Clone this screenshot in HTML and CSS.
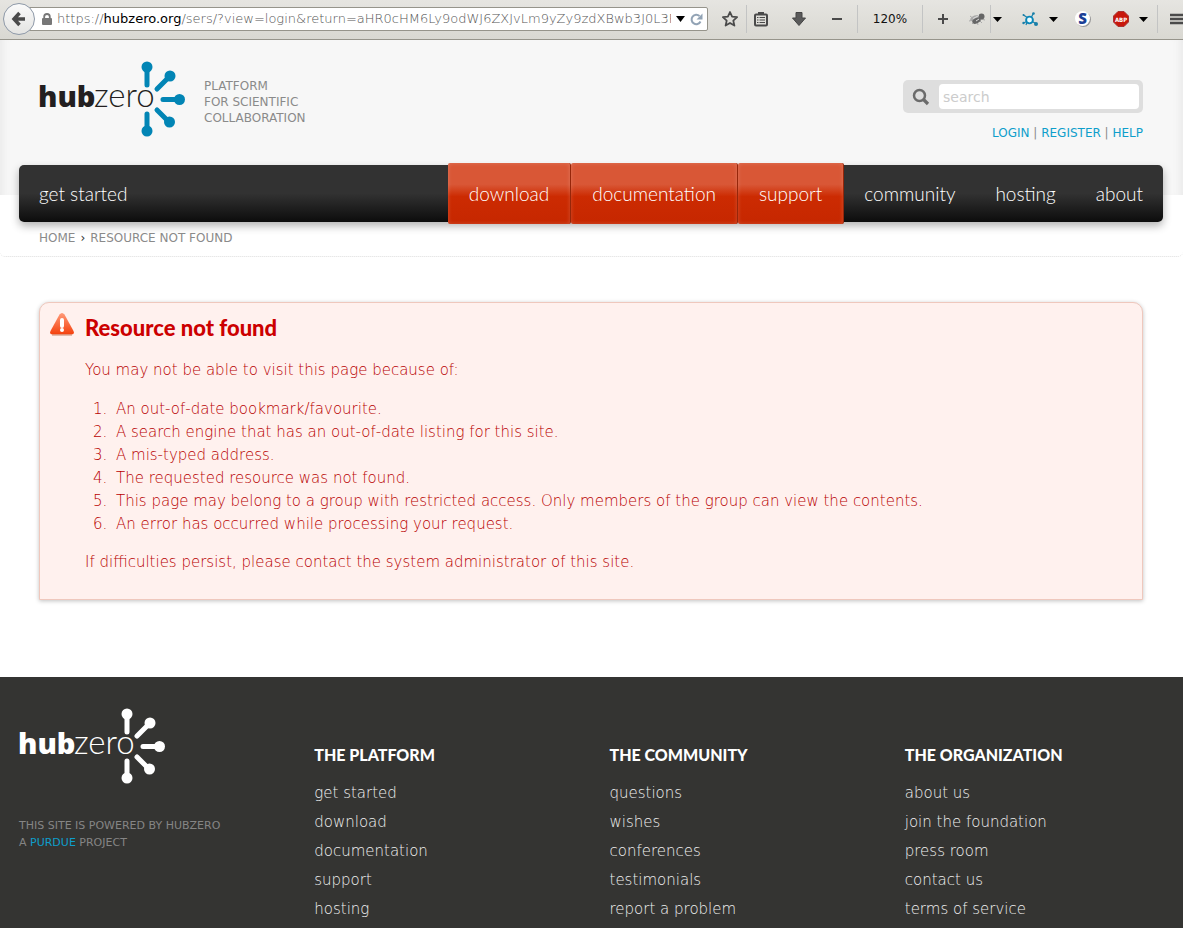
FILE: index.html
```html
<!DOCTYPE html>
<html lang="en">
<head>
<meta charset="utf-8">
<title>Resource not found</title>
<link rel="stylesheet" href="styles.css">
</head>
<body>
<div class="toolbar">
  <div class="location">
    <button class="back" aria-label="Back"><svg width="16" height="16" viewBox="0 0 16 16"><path d="M8.500 2L3 8l5.500 6M3 8h11" fill="none" stroke="#4a4a4a" stroke-width="3.500"/></svg></button>
    <div class="address">
      <svg width="10" height="12" viewBox="0 0 10 12"><path d="M2.200 6V3.800a2.800 2.800 0 0 1 5.600 0V6" fill="none" stroke="#777" stroke-width="1.800"/><rect y="5" width="10" height="7" rx="1" fill="#777"/></svg>
      <span class="url">https://<b>hubzero.org</b>/sers/?view=login&amp;return=aHR0cHM6Ly9odWJ6ZXJvLm9yZy9zdXBwb3J0L3RpY</span>
      <button class="mini" aria-label="History"><svg width="9" height="6" viewBox="0 0 9 6"><path d="M0 0h9L4.500 6z"/></svg></button>
      <button class="mini reload" aria-label="Reload"><svg width="13" height="13" viewBox="0 0 13 13"><path d="M9.500 3A4.700 4.700 0 1 0 10.500 8.500" fill="none" stroke="#92a3b5" stroke-width="2"/><path d="M12.500.5v6h-6z" fill="#92a3b5"/></svg></button>
    </div>
  </div>
  <button class="tool w28" aria-label="Bookmark"><svg width="18" height="18" viewBox="0 0 18 18"><path d="M9 2l2.100 4.700 5 .5-3.800 3.400 1.100 5L9 13l-4.400 2.600 1.100-5L1.900 7.200l5-.5z" fill="none" stroke="#4a4a4a" stroke-width="1.800" stroke-linejoin="round"/></svg></button>
  <i class="rule w4"></i>
  <button class="tool w26" aria-label="Bookmarks list"><svg width="16" height="16" viewBox="0 0 16 16"><rect x="2" y="3.500" width="12" height="11" rx="1" fill="none" stroke="#4a4a4a" stroke-width="2"/><path d="M5 1h6v3H5z" fill="#4a4a4a"/><path d="M4 6.500h1.500m1 0H12M4 9h1.500m1 0H12M4 11.500h1.500m1 0H12" stroke="#4a4a4a" stroke-width="1"/></svg></button>
  <button class="tool w50" aria-label="Downloads"><svg width="14" height="14" viewBox="0 0 14 14"><path d="M4 .5h6V6h3.500L7 13.500.5 6H4z" fill="#5a5a5a" stroke="#444"/></svg></button>
  <button class="tool w26" aria-label="Zoom out"><svg width="10" height="10" viewBox="0 0 10 10"><path d="M0 5h10" stroke="#4a4a4a" stroke-width="2"/></svg></button>
  <i class="rule w14"></i>
  <button class="tool w52">120%</button>
  <i class="rule w12"></i>
  <button class="tool w30" aria-label="Zoom in"><svg width="10" height="10" viewBox="0 0 10 10"><path d="M0 5h10M5 0v10" stroke="#4a4a4a" stroke-width="2"/></svg></button>
  <button class="tool fly" aria-label="Debugger"><svg width="18" height="14" viewBox="0 0 18 14"><path d="M2 4l4 3M1 9l5-1M4 12l3-3M10 13l-1-4M14 11l-3-3M17 8l-4-1" stroke="#aaa" stroke-width="1"/><ellipse cx="7.500" cy="6" rx="5.500" ry="2.800" fill="#aaa" transform="rotate(-20 8 6.500)"/><ellipse cx="8.500" cy="8.500" rx="4.500" ry="2.600" fill="#666" transform="rotate(-25 9 8.500)"/><circle cx="13.500" cy="4.500" r="3" fill="#666"/><path d="M5 6.500l6-3M8 9l3-2" stroke="#ddd"/></svg></button>
  <i class="rule w1"></i>
  <button class="tool w12" aria-label="Debugger menu"><svg width="9" height="5" viewBox="0 0 9 5"><path d="M0 0h9L4.500 5z"/></svg></button>
  <button class="tool w54" aria-label="Network"><svg width="16" height="14" viewBox="0 0 16 14"><path d="M1.500 3L6 6M1.500 11L6 9M9 6L11.500 1M10 9.500l4 2M5 10l-1 3" stroke="#1a7fa8" stroke-width="1.200"/><circle cx="7.500" cy="8" r="3.400" fill="#e8fbff" stroke="#0a86b8" stroke-width="1.900"/><circle cx="11.500" cy="1.500" r="1.300" fill="#1a7fa8"/><circle cx="14" cy="12" r="2" fill="#1a7fa8"/><circle cx="1.500" cy="3" r="1" fill="#1a7fa8"/><circle cx="1.500" cy="11" r="1.200" fill="#1a7fa8"/></svg></button>
  <button class="tool w12 pull" aria-label="Network menu"><svg width="9" height="5" viewBox="0 0 9 5"><path d="M0 0h9L4.500 5z"/></svg></button>
  <button class="tool w48" aria-label="S"><svg class="loose" width="16" height="16" viewBox="0 0 16 16"><circle cx="8.500" cy="8.500" r="7.500" fill="#999"/><circle cx="7.500" cy="7.500" r="7.500" fill="#fff"/><text x="7.500" y="13" text-anchor="middle" class="s-glyph">S</text></svg></button>
  <button class="tool w28" aria-label="Adblock"><svg width="16" height="16" viewBox="0 0 16 16"><path d="M5 .5h6L15.500 5v6L11 15.500H5L.5 11V5z" fill="#c8180c" stroke="#a33"/><text x="8" y="10.500" text-anchor="middle" class="abp-glyph">ABP</text></svg></button>
  <button class="tool w16" aria-label="Adblock menu"><svg width="9" height="5" viewBox="0 0 9 5"><path d="M0 0h9L4.500 5z"/></svg></button>
  <i class="rule w12"></i>
  <button class="tool menu" aria-label="Menu"><svg width="16" height="14" viewBox="0 0 16 14"><path d="M0 2h16M0 7h16M0 12h16" stroke="#4a4a4a" stroke-width="3"/></svg></button>
</div>

<header class="masthead">
  <a class="brand" href="#" aria-label="hubzero">
    <svg class="logo" width="148" height="78" viewBox="0 0 148 78">
      <text class="logo-hub" x="-1" y="46">hub</text><text class="logo-zero" x="55" y="46">zero</text>
      <g class="spokes"><path d="M108 10v14M118 28l13-13M124 38.500h17M118 49l13 13M108 53v14"/><circle cx="108" cy="6" r="5.500"/><circle cx="131" cy="15" r="5.500"/><circle cx="140.500" cy="38.500" r="5.500"/><circle cx="130.500" cy="61" r="5.500"/><circle cx="108" cy="70" r="5.500"/></g>
    </svg>
  </a>
  <p class="tagline">Platform<br>for scientific<br>collaboration</p>
  <div class="account">
    <form class="search">
      <label for="q" aria-label="Search"><svg width="18" height="18" viewBox="0 0 18 18"><circle cx="7.500" cy="7.500" r="5.500" fill="none" stroke="#6b6b6b" stroke-width="2.500"/><path d="M11.500 11.500l4.500 4.500" stroke="#6b6b6b" stroke-width="3.200"/></svg></label>
      <input id="q" type="text" placeholder="search">
    </form>
    <p class="links"><a href="#">Login</a> | <a href="#">Register</a> | <a href="#">Help</a></p>
  </div>
</header>

<nav class="nav">
  <a class="first" href="#">get started</a>
  <a class="hot" href="#">download</a>
  <a class="hot" href="#">documentation</a>
  <a class="hot" href="#">support</a>
  <a href="#">community</a>
  <a href="#">hosting</a>
  <a href="#">about</a>
</nav>
<div class="trail"><a href="#">Home</a> <b>›</b> <span>Resource not found</span></div>

<main class="content">
  <section class="error">
    <svg class="warn" width="24" height="24" viewBox="0 0 24 24">
      <defs><linearGradient id="wg" x2="0" y2="1"><stop offset="0" stop-color="#ff9a78"/><stop offset="1" stop-color="#f4400c"/></linearGradient></defs>
      <path d="M2.500 22.500h19q3.500 0 2-3.500L14.500 2.500q-2.500-3-5 0L.5 19q-1.500 3.500 2 3.500z" fill="url(#wg)"/>
      <path d="M2 23h20" stroke="#c9856b"/>
      <path d="M12 8v6" stroke="#fff" stroke-width="4" stroke-linecap="round"/><circle cx="12" cy="18" r="2" fill="#fff"/>
    </svg>
    <div>
      <h1>Resource not found</h1>
      <p>You may not be able to visit this page because of:</p>
      <ol>
        <li>An out-of-date bookmark/favourite.</li>
        <li>A search engine that has an out-of-date listing for this site.</li>
        <li>A mis-typed address.</li>
        <li>The requested resource was not found.</li>
        <li>This page may belong to a group with restricted access. Only members of the group can view the contents.</li>
        <li>An error has occurred while processing your request.</li>
      </ol>
      <p>If difficulties persist, please contact the system administrator of this site.</p>
    </div>
  </section>
</main>

<footer class="footer">
  <div class="about">
    <svg class="logo light" width="148" height="78" viewBox="0 0 148 78" role="img" aria-label="hubzero">
      <text class="logo-hub" x="-1" y="46">hub</text><text class="logo-zero" x="55" y="46">zero</text>
      <g class="spokes"><path d="M108 10v14M118 28l13-13M124 38.500h17M118 49l13 13M108 53v14"/><circle cx="108" cy="6" r="5.500"/><circle cx="131" cy="15" r="5.500"/><circle cx="140.500" cy="38.500" r="5.500"/><circle cx="130.500" cy="61" r="5.500"/><circle cx="108" cy="70" r="5.500"/></g>
    </svg>
    <p>This site is powered by HUBzero<br>A <a href="#">Purdue</a> project</p>
  </div>
  <div class="col"><h2>The Platform</h2><ul><li><a href="#">get started</a></li><li><a href="#">download</a></li><li><a href="#">documentation</a></li><li><a href="#">support</a></li><li><a href="#">hosting</a></li></ul></div>
  <div class="col"><h2>The Community</h2><ul><li><a href="#">questions</a></li><li><a href="#">wishes</a></li><li><a href="#">conferences</a></li><li><a href="#">testimonials</a></li><li><a href="#">report a problem</a></li></ul></div>
  <div class="col"><h2>The Organization</h2><ul><li><a href="#">about us</a></li><li><a href="#">join the foundation</a></li><li><a href="#">press room</a></li><li><a href="#">contact us</a></li><li><a href="#">terms of service</a></li></ul></div>
</footer>
</body>
</html>
```
FILE: styles.css
```css
* { box-sizing: border-box; }
html { background: #343432; }
body { margin: 0; background: #fff; font: 400 12px/16px "DejaVu Sans", sans-serif; color: #8a8a8a; overflow-x: hidden; }
a { color: inherit; text-decoration: none; }
h1, h2, p, ol, ul { margin: 0; }
button { border: 0; background: none; padding: 0; font: 400 12px "DejaVu Sans", sans-serif; color: #111; }

/* Browser toolbar */
.toolbar { display: flex; align-items: center; height: 40px; padding-bottom: 1px; background: linear-gradient(#e6e5e1, #d9d8d2); border-bottom: 1px solid #96948b; overflow: hidden; }
.location { flex: 1; min-width: 0; display: flex; align-items: center; margin-right: 8px; }
.back { flex: none; width: 32px; height: 32px; margin-left: 3px; border: 1px solid #8e99a8; border-radius: 50%; background: linear-gradient(#fafafa, #e4e4e2); display: flex; align-items: center; justify-content: center; z-index: 1; }
.address { flex: 1; min-width: 0; height: 24px; display: flex; align-items: center; gap: 5px; margin-left: -6px; padding: 0 4px 0 12px; background: #fff; border: 1px solid #96948b; border-radius: 0 2px 2px 0; }
.address svg { flex: none; }
.url { flex: 1; min-width: 0; overflow: hidden; white-space: nowrap; font: 200 13px/20px "DejaVu Sans", sans-serif; color: #555; }
.url b { font-weight: 400; color: #000; }
.mini { display: flex; }
.tool { flex: none; height: 32px; display: flex; align-items: center; justify-content: center; }
.w1 { width: 1px; } .w4 { width: 4px; } .w12 { width: 12px; } .w14 { width: 14px; } .w16 { width: 16px; }
.w26 { width: 26px; } .w28 { width: 28px; } .w30 { width: 30px; } .w48 { width: 48px; }
.w50 { width: 50px; } .w52 { width: 52px; } .w54 { width: 54px; }
.pull { margin-left: -10px; }
.loose { overflow: visible; }
.fly { width: 32px; padding-left: 6px; }
.menu { width: 20px; padding-left: 7px; justify-content: flex-start; overflow: hidden; }
.rule { flex: none; height: 28px; background: linear-gradient(#c3c4c4, #c3c4c4) center / 1px 100% no-repeat; }
.s-glyph { font: 800 15px "Open Sans", sans-serif; fill: #1a3f96; }
.abp-glyph { font: 700 6px "DejaVu Sans Condensed", "DejaVu Sans", sans-serif; fill: #fff; }

/* Site header */
.masthead { display: flex; align-items: flex-start; height: 155px; padding: 21px 40px 0 39px; background: #f7f7f7; box-shadow: inset 10px 0 10px -8px #e8e8e8, inset -10px 0 10px -8px #e8e8e8; }
.brand, .logo { display: block; }
.logo { overflow: visible; }
.logo-hub { font: 800 29px "Open Sans", sans-serif; fill: #231f20; }
.logo-zero { font: 300 33px Lato, sans-serif; fill: #231f20; }
.spokes { fill: #0285b5; }
.spokes path { stroke: #0285b5; stroke-width: 5; stroke-linecap: round; }
.light text, .light .spokes { fill: #fff; }
.light .spokes path { stroke: #fff; }
.tagline { margin: 17px 0 0 17px; text-transform: uppercase; }
.account { margin: 19px 0 0 auto; }
.search { display: flex; align-items: center; width: 240px; height: 33px; padding: 4px; border-radius: 5px; background: #dedede; }
.search label { flex: none; display: flex; justify-content: center; width: 32px; padding-right: 4px; }
.search input { flex: 1; min-width: 0; height: 25px; padding: 0 4px; border: 0; border-radius: 4px; background: #fff; font: 400 14px "DejaVu Sans", sans-serif; }
.search input::placeholder { color: #ccc; }
.links { margin-top: 12px; text-align: right; text-transform: uppercase; }
.links a { color: #0e9ecb; }

/* Main navigation */
.nav { display: flex; align-items: center; height: 57px; margin: -30px 20px 0 19px; border-radius: 5px; background: linear-gradient(#323232 50%, #0c0c0c); box-shadow: 0 4px 8px rgba(0, 0, 0, .3); font: 300 19px/57px Lato, sans-serif; color: #fff; }
.nav a { padding: 0 20px; }
.nav .first { margin-right: auto; }
.nav .hot { padding: 0 21px; line-height: 61px; border-right: 1px solid #96260a; border-radius: 2px; background: linear-gradient(#d95736 35%, #cc2b02 55%, #c62700); box-shadow: inset 0 0 4px rgba(255, 255, 255, .2); }
.trail { display: flex; gap: 5px; height: 35px; padding: 8px 39px; border-bottom: 1px dotted #ddd; border-radius: 5px; text-transform: uppercase; }
.trail b { font-weight: 400; color: #333; }

/* Error message */
.content { padding: 45px 40px 77px 39px; }
.error { display: flex; gap: 11px; padding: 9px 10px 25px; border: 1px solid #efc8bd; border-radius: 10px 10px 0 0; background: #fff1ee; box-shadow: 0 1px 4px rgba(0, 0, 0, .25); color: #b80000; font-size: 15px; line-height: 23px; font-weight: 200; }
.warn { flex: none; }
.error h1 { margin-top: 4px; font: 900 22px/24px Lato, sans-serif; color: #c00; }
.error p { margin-top: 19px; }
.error ol { margin-top: 16px; padding-left: 27px; }
.error li { padding-left: 4px; }
.error ol + p { margin-top: 15px; }

/* Footer */
.footer { display: grid; grid-template-columns: repeat(4, 1fr); padding: 31px 0 0 19px; margin-right: -17px; background: #343432; color: #858585; }
.about p { margin-top: 31px; font-size: 11px; line-height: 17px; text-transform: uppercase; }
.about a { color: #0e9ecb; }
.col { padding-top: 35px; }
.col h2 { font: 900 16px/24px Lato, sans-serif; color: #fff; text-transform: uppercase; }
.col ul { margin-top: 12px; padding: 0; list-style: none; color: #f0f0f0; font-size: 15px; font-weight: 200; }
.col li { line-height: 29px; }
```
